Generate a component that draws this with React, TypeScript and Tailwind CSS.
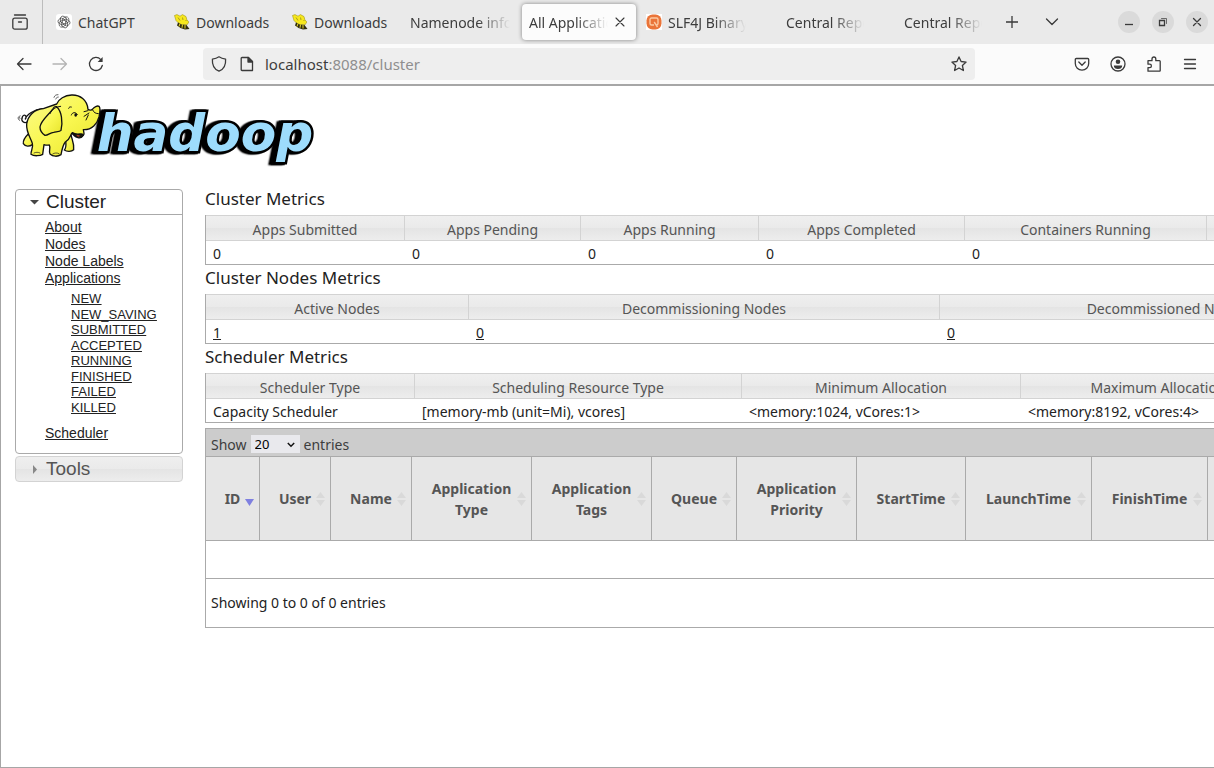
import type { ReactNode } from "react";

const ui = "font-['Noto_Sans','Open_Sans',sans-serif]";

type TabInfo = { title: string; icon: "gpt" | "bee" | "mvn" | "blank" | "none"; active?: boolean };

const tabs: TabInfo[] = [
  { title: "ChatGPT", icon: "gpt" },
  { title: "Downloads", icon: "bee" },
  { title: "Downloads", icon: "bee" },
  { title: "Namenode information", icon: "none" },
  { title: "All Applications", icon: "none", active: true },
  { title: "SLF4J Binary", icon: "mvn" },
  { title: "Central Repository", icon: "blank" },
  { title: "Central Repository", icon: "blank" },
];

function Favicon({ kind }: { kind: TabInfo["icon"] }) {
  if (kind === "none") return null;
  if (kind === "blank") return <span className="w-4 shrink-0" />;
  if (kind === "gpt")
    return (
      <svg viewBox="0 0 16 16" className="size-4 shrink-0" aria-hidden="true">
        <rect width="16" height="16" rx="3" fill="#fff" />
        <g fill="none" stroke="#444" strokeWidth="0.700">
          {[0, 60, 120, 180, 240, 300].map((a) => (
            <path key={a} transform={`rotate(${a} 8 8)`} d="M6.300 9V5L8.800 3.300A2.500 2.500 0 0 1 12.800 5.400V7.800L9.200 9.900" />
          ))}
        </g>
      </svg>
    );
  if (kind === "bee")
    return (
      <svg viewBox="0 0 16 16" className="size-4 shrink-0" aria-hidden="true">
        <path d="M.5 1.500 3 .6 6 2.200 8.500.600l3.500 2 .8 3 2 2.400-1.500 2.500L8 11 4.500 9 2 6.500Z" fill="#f7e81d" stroke="#a39619" strokeWidth=".6" />
        <path d="M4 8.500 7.500 10.500l5 .5 3 4-4.500.5L6.500 14 3 11.500Z" fill="#302c10" />
        <path d="m6 9.500-1 3M8.500 10.500 8 13.800M11 11V14.500" stroke="#e9d92a" strokeWidth="1" />
        <path d="m4 3.500 2 3M8.500 3.500l.5 2.500M11.500 6.500h1" stroke="#8a7f14" strokeWidth=".7" />
      </svg>
    );
  return (
    <svg viewBox="0 0 16 16" className="size-4 shrink-0" aria-hidden="true">
      <rect width="16" height="16" fill="#fff" />
      <rect x=".5" y=".5" width="15" height="15" rx="6" fill="#ea7439" />
      <path d="M8 11H5.500A1.500 1.500 0 0 1 4 9.500v-4A1.500 1.500 0 0 1 5.500 4h5A1.500 1.500 0 0 1 12 5.500v4a1.500 1.500 0 0 1-1.500 1.500M8.200 8l3.300 5" fill="none" stroke="#fbc9a2" strokeWidth="1.400" />
    </svg>
  );
}

function Glyph({ children, faded }: { children: ReactNode; faded?: boolean }) {
  return (
    <svg
      viewBox="0 0 16 16"
      className={faded ? "size-4 text-[#b4b4b4]" : "size-4 text-[#3a3a3a]"}
      fill="none"
      stroke="currentColor"
      strokeWidth="1.300"
      strokeLinecap="round"
      strokeLinejoin="round"
      aria-hidden="true"
    >
      {children}
    </svg>
  );
}

function IconButton({ label, children, faded }: { label: string; children: ReactNode; faded?: boolean }) {
  return (
    <button type="button" aria-label={label} disabled={faded} className="grid h-8 w-9 shrink-0 place-items-center">
      <Glyph faded={faded}>{children}</Glyph>
    </button>
  );
}

function WindowButton({ label, children }: { label: string; children: ReactNode }) {
  return (
    <button type="button" aria-label={label} className="grid size-[22px] place-items-center rounded-full bg-[#dadada]">
      <Glyph>{children}</Glyph>
    </button>
  );
}

function Tab({ tab }: { tab: TabInfo }) {
  return (
    <div
      className={
        tab.active
          ? "mx-[2px] flex h-9 w-[114px] shrink-0 items-center gap-1 rounded bg-[#fcfcfc] pr-2 pl-[7px] shadow-[0_0_4px_rgba(0,0,0,0.45)]"
          : "mx-[2px] flex h-9 w-[114px] shrink-0 items-center gap-[6px] pr-2 pl-[6px]"
      }
    >
      <Favicon kind={tab.icon} />
      <button
        type="button"
        className={
          tab.title.length > 10
            ? "min-w-0 flex-1 overflow-hidden text-left whitespace-nowrap [mask-image:linear-gradient(to_left,transparent,black_32px)]"
            : "min-w-0 flex-1 overflow-hidden text-left whitespace-nowrap"
        }
      >
        {tab.title}
      </button>
      {tab.active && (
        <button type="button" aria-label="Close tab" className="grid w-4 shrink-0 place-items-center">
          <Glyph>
            <path d="m4 4 8 8m0-8-8 8" strokeWidth="1.100" />
          </Glyph>
        </button>
      )}
    </div>
  );
}

function BrowserChrome() {
  return (
    <header className={`${ui} text-[#3d3d3d]`}>
      <div className="flex h-11 items-center bg-[#eaeaea] text-[14px]">
        <div className="flex h-full w-[43px] shrink-0 items-center justify-center border-r border-[#bcbcbc] pr-[2px]">
          <button type="button" aria-label="Recent browsing">
            <Glyph>
              <rect x=".8" y="4.200" width="14.400" height="11" rx="2" />
              <path d="M2.500 1h11M6.500 8h3" />
            </Glyph>
          </button>
        </div>
        <nav aria-label="Tabs" className="flex shrink-0 items-center pl-[5px]">
          {tabs.map((t, i) => (
            <Tab key={i} tab={t} />
          ))}
        </nav>
        <div className="flex shrink-0 gap-1 pl-[2px]">
          <IconButton label="New tab">
            <path d="M8 2v12M2 8h12" strokeLinecap="butt" />
          </IconButton>
          <IconButton label="List all tabs">
            <path d="m2.500 5 5.500 5.500L13.500 5" />
          </IconButton>
        </div>
        <div className="ml-auto flex shrink-0 gap-3 pr-[6px]">
          <WindowButton label="Minimize">
            <path d="M4 10.500h8" strokeLinecap="butt" />
          </WindowButton>
          <WindowButton label="Restore">
            <path d="M4.500 6.500h5v5h-5z" strokeLinejoin="miter" />
            <path d="M6.500 4.500h5v5" strokeWidth="1" strokeLinejoin="miter" opacity=".7" />
          </WindowButton>
          <WindowButton label="Close">
            <path d="m4.500 4.500 7 7m0-7-7 7" />
          </WindowButton>
        </div>
      </div>
      <div className="flex h-10 items-center bg-[#fbfbfb] px-[6px]">
        <IconButton label="Back">
          <path d="M15 8H1.500M7 2.500 1.500 8 7 13.500" />
        </IconButton>
        <IconButton label="Forward" faded>
          <path d="M1 8h13.500M9 2.500 14.500 8 9 13.500" />
        </IconButton>
        <IconButton label="Reload">
          <path d="M14.300 9.500A6.500 6.500 0 1 1 12.800 3.600" />
          <path d="M14.600 1v5h-5z" fill="currentColor" stroke="none" />
        </IconButton>
        <div className="ml-[89px] flex h-8 flex-1 items-center rounded bg-[#eeeeee] pl-2">
          <Glyph>
            <path d="M8 .8c2 1.400 4 2 6.600 2.300.4 5.500-1.300 10-6.600 12.100C2.700 13.100 1 8.600 1.400 3.100 4 2.800 6 2.200 8 .8Z" />
          </Glyph>
          <span className="ml-3">
            <Glyph>
              <path d="M3 1.500h6.500l4 4V14.500H3a.8.8 0 0 1-.8-.8V2.300a.8.8 0 0 1 .8-.8Z" />
              <path d="M9 1.500v4.500h4.500z" fill="currentColor" />
            </Glyph>
          </span>
          <div className="relative ml-[10px] flex-1 text-[15px] leading-5">
            <div aria-hidden="true" className="whitespace-nowrap">
              localhost<span className="text-[#8f8f8f]">:8088/cluster</span>
            </div>
            <input
              aria-label="Address"
              defaultValue="localhost:8088/cluster"
              className="absolute inset-0 w-full bg-transparent text-transparent caret-black outline-none"
            />
          </div>
          <button type="button" aria-label="Bookmark this page" className="pr-2">
            <Glyph>
              <path d="m8 .9 2.100 4.600 5 .6-3.700 3.400 1 5L8 12l-4.400 2.500 1-5L.9 6.100l5-.6Z" />
            </Glyph>
          </button>
        </div>
        <div className="ml-[89px] flex shrink-0">
          <IconButton label="Save to Pocket">
            <path d="M2.300 2.500h11.400a1 1 0 0 1 1 1V7.500a6.700 6.700 0 0 1-13.400 0v-4a1 1 0 0 1 1-1ZM4.800 6 8 9.200 11.200 6" />
          </IconButton>
          <IconButton label="Account">
            <circle cx="8" cy="8" r="7" />
            <circle cx="8" cy="5.800" r="2.300" fill="currentColor" stroke="none" />
            <path d="M3.800 9.500h8.400c0 2.300-1.700 3.600-4.200 3.600s-4.200-1.300-4.200-3.600Z" fill="currentColor" stroke="none" />
          </IconButton>
          <IconButton label="Extensions">
            <path d="M2 6.200V4.700h4V2.900a1.900 1.900 0 0 1 3.800 0v1.800h3.700a.7.700 0 0 1 .7.700V14.500a.7.700 0 0 1-.7.700H2v-3.600h1.700a1.700 1.700 0 0 0 0-3.400H2Z" />
          </IconButton>
          <IconButton label="Menu">
            <path d="M2.500 3.500h11M2.500 8h11M2.500 12.500h11" />
          </IconButton>
        </div>
      </div>
    </header>
  );
}

function HadoopLogo() {
  return (
    <svg viewBox="48 24 912 222" className="w-[304px]" role="img" aria-label="hadoop">
      <defs>
        <linearGradient id="hide" x1="0" y1="0" x2="1" y2="1">
          <stop offset="0" stopColor="#fbfa8c" />
          <stop offset=".5" stopColor="#f9f750" />
          <stop offset="1" stopColor="#e6e32a" />
        </linearGradient>
      </defs>
      <text
        x="290"
        y="198"
        className="font-['DejaVu_Sans',sans-serif] text-[155px] font-bold italic [filter:drop-shadow(-7px_1px_0_#000)_drop-shadow(-7px_1px_0_#000)]"
        fill="#9ddcfc"
        stroke="#000"
        strokeWidth="15"
        strokeLinejoin="miter"
        paintOrder="stroke"
      >
        hadoop
      </text>
      <g fill="url(#hide)" stroke="#111" strokeWidth="4" strokeLinecap="round" strokeLinejoin="round">
        <path d="M84 110c-12 8-22-2-17-14s16-2 9 6c4-14 26-28 52-31" fill="none" />
        <path d="M84 148c-12 12-15 20-14 28 6 9 18 9 27 3l8-18Z" />
        <path d="M197 158c0 18 4 30-4 37 8 6 22 5 28-1 2-18-5-30-8-44Z" />
        <path d="M130 71c-28 2-46 22-50 46-2 24 12 42 17 58 4 12-5 22-4 33 8 6 28 5 35 0l4-29c6 2 11 2 16 1 5 10-3 18 2 27 9 9 24 8 33 2 3-17 6-29 13-38 14-8 14-18 19-26 10 8 24 7 30 8 10 0 7-10 5-19 26 1 42-18 47-38 4-18 3-29 0-32-5-3-15 2-19 8-3 4-10 4-14 1-2-28-24-44-49-43-21 1-39 12-45 27Z" />
        <path d="M217 143c7 5 14 5 23 4 4 0 9-1 9 3-1 7-8 10-15 8-9-3-15-9-17-15Z" fill="#1a1609" />
        <path d="M229 151c4-2 9-1 11 1-3 4-8 4-11-1Z" fill="#a83a24" stroke="none" />
        <path d="M160 70c-14 20-38 36-40 56 0 12 7 20 15 25 10 0 15-8 26-9 10-2 19-2 22-6 6-25 2-58-13-71-5-1-8 0-10 5Z" />
        <path d="M150 86c6-13 16-20 32-22M214 90c2-8 13-11 18-1M206 70c1-4 4-5 8-4M252 80l12-3M252 94l15-10M258 105l7-15M278 75c3 8 10 11 17 11" fill="none" strokeWidth="3" />
        <ellipse cx="227" cy="90" rx="4" ry="5" fill="#111" stroke="none" />
        <path d="M162 37c2-6 6-8 12-8M167 42c2-4 5-6 8-6M55 96c-2 5 0 8 4 10M60 92c-2 3-2 7 0 9M102 204c5-3 13-3 18 0M158 207c6-4 13-4 19-1" fill="none" strokeWidth="2" />
      </g>
    </svg>
  );
}

const states = ["NEW", "NEW_SAVING", "SUBMITTED", "ACCEPTED", "RUNNING", "FINISHED", "FAILED", "KILLED"];
const glass = "bg-[linear-gradient(#efefef,#eaeaea_50%,#e4e4e4_50%,#ededed)]";

function Sidebar() {
  return (
    <nav aria-label="Cluster navigation" className="mt-[3px] w-[168px] shrink-0 font-['Liberation_Sans',Arial,sans-serif]">
      <div className="rounded border border-[#aaaaaa] bg-white">
        <button
          type="button"
          aria-expanded="true"
          className="flex h-[25px] w-full items-center gap-[7px] border-b border-[#aaaaaa] pl-[14px] text-[19px] leading-6"
        >
          <svg viewBox="0 0 9 6" className="h-[6px] w-[9px]" aria-hidden="true">
            <path d="M0 1h9L4.500 5.500z" fill="#454545" />
          </svg>
          Cluster
        </button>
        <ul className="pt-1 pb-[11px] pl-[29px] text-[14px] leading-[17px] underline">
          <li><a href="#about">About</a></li>
          <li><a href="#nodes">Nodes</a></li>
          <li><a href="#labels">Node Labels</a></li>
          <li>
            <a href="#apps">Applications</a>
            <ul className="mt-1 mb-[10px] grid h-[124px] grid-rows-8 pl-[26px] text-[13px] leading-[15px] underline">
              {states.map((s) => (
                <li key={s}><a href={`#${s}`}>{s}</a></li>
              ))}
            </ul>
          </li>
          <li><a href="#scheduler">Scheduler</a></li>
        </ul>
      </div>
      <button
        type="button"
        aria-expanded="false"
        className={`mt-[2px] flex h-[26px] w-full items-center gap-[7px] rounded border border-[#d3d3d3] pl-[14px] text-[19px] leading-6 text-[#555555] ${glass}`}
      >
        <svg viewBox="0 0 9 9" className="size-[9px]" aria-hidden="true">
          <path d="M3 0v9l4-4.500z" fill="#888" />
        </svg>
        Tools
      </button>
    </nav>
  );
}

type Col = { width: string; head: string; value: string; link?: boolean };

function Metrics({ title, width, cols }: { title: string; width: string; cols: Col[] }) {
  return (
    <section>
      <h2 className="pt-px pb-1 text-[17px] leading-6">{title}</h2>
      <table className={`table-fixed border-separate border-spacing-0 border-r border-b border-l border-[#aaaaaa] ${width}`}>
        <thead>
          <tr className="h-[26px]">
            {cols.map((c, i) => (
              <th
                key={i}
                className={`border-t border-r border-b border-[#d3d3d3] p-0 pt-1 leading-5 font-normal whitespace-nowrap text-[#555555] ${glass} ${c.width}`}
              >
                {c.head}
              </th>
            ))}
          </tr>
        </thead>
        <tbody>
          <tr className="h-[23px]">
            {cols.map((c, i) => (
              <td key={i} className="p-0 pt-[2px] pl-[7px] leading-5 whitespace-nowrap">
                {c.link ? <a href="#nodes" className="underline">{c.value}</a> : c.value}
              </td>
            ))}
          </tr>
        </tbody>
      </table>
    </section>
  );
}

const appCols = [
  { head: "ID", width: "w-[54px]" },
  { head: "User", width: "w-[71px]" },
  { head: "Name", width: "w-[81px]" },
  { head: "Application Type", width: "w-[120px]" },
  { head: "Application Tags", width: "w-[120px]" },
  { head: "Queue", width: "w-[85px]" },
  { head: "Application Priority", width: "w-[120px]" },
  { head: "StartTime", width: "w-[109px]" },
  { head: "LaunchTime", width: "w-[126px]" },
  { head: "FinishTime", width: "w-[116px]" },
  { head: "", width: "w-[98px]" },
];

function Applications() {
  return (
    <section className="mt-[5px] w-[1101px] border border-[#aaaaaa]">
      <div className="flex h-[27px] items-center bg-[#cccccc] pt-[3px] pl-[5px] text-[#3d3d3d]">
        <label htmlFor="page-size">Show</label>
        <span className="relative mx-1 flex">
          <select
            id="page-size"
            defaultValue="20"
            className="h-[18px] w-[49px] appearance-none bg-[#e9e9ed] pl-1 text-[13px] leading-[18px] text-black"
          >
            <option>20</option>
            <option>40</option>
            <option>60</option>
            <option>80</option>
            <option>100</option>
          </select>
          <svg viewBox="0 0 8 6" className="pointer-events-none absolute top-[7px] right-[5px] h-[6px] w-2" aria-hidden="true">
            <path d="m.8 1 3.200 3.200L7.200 1" fill="none" stroke="#111" strokeWidth="1.500" />
          </svg>
        </span>
        <span>entries</span>
      </div>
      <table className="w-full table-fixed border-separate border-spacing-0">
        <thead>
          <tr className="h-[85px] bg-[#e6e6e6]">
            {appCols.map((c, i) => (
              <th key={i} className={`relative border-y border-r border-[#aaaaaa] px-3 py-0 leading-[21px] font-bold text-[#555555] ${c.width}`}>
                {c.head && <button type="button">{c.head}</button>}
                {c.head && (
                  <svg viewBox="0 0 9 14" className="pointer-events-none absolute top-[35px] right-[5px] h-[14px] w-[9px]" aria-hidden="true">
                    {i === 0 ? (
                      <path d="M0 7h9l-4.500 7z" fill="#7f80e0" />
                    ) : (
                      <path d="M0 6h9L4.500 0zM0 8h9l-4.500 6z" fill="#d9d9d9" />
                    )}
                  </svg>
                )}
              </th>
            ))}
          </tr>
        </thead>
        <tbody>
          <tr className="h-[38px]">
            <td colSpan={appCols.length} className="border-b border-[#aaaaaa]" />
          </tr>
        </tbody>
      </table>
      <p className="py-[14px] pl-[5px] leading-5">Showing 0 to 0 of 0 entries</p>
    </section>
  );
}

export default function App() {
  return (
    <div className="flex min-h-screen flex-col overflow-hidden bg-white text-[#222222]">
      <BrowserChrome />
      <main className="flex-1 border-t-2 border-b border-l border-[#a6a6a6]">
        <div className="h-[100px] pt-[7px] pl-[15px]">
          <HadoopLogo />
        </div>
        <div className="flex items-start gap-[22px] pl-[14px]">
          <Sidebar />
          <div className={`min-w-0 flex-1 text-[14px] ${ui}`}>
            <Metrics
              title="Cluster Metrics"
              width="w-[1102px]"
              cols={[
                { width: "w-[199px]", head: "Apps Submitted", value: "0" },
                { width: "w-[176px]", head: "Apps Pending", value: "0" },
                { width: "w-[178px]", head: "Apps Running", value: "0" },
                { width: "w-[206px]", head: "Apps Completed", value: "0" },
                { width: "w-[242px]", head: "Containers Running", value: "0" },
                { width: "w-[99px]", head: "", value: "" },
              ]}
            />
            <Metrics
              title="Cluster Nodes Metrics"
              width="w-[1190px]"
              cols={[
                { width: "w-[263px]", head: "Active Nodes", value: "1", link: true },
                { width: "w-[471px]", head: "Decommissioning Nodes", value: "0", link: true },
                { width: "w-[454px]", head: "Decommissioned Nodes", value: "0", link: true },
              ]}
            />
            <Metrics
              title="Scheduler Metrics"
              width="w-[1092px]"
              cols={[
                { width: "w-[209px]", head: "Scheduler Type", value: "Capacity Scheduler" },
                { width: "w-[327px]", head: "Scheduling Resource Type", value: "[memory-mb (unit=Mi), vcores]" },
                { width: "w-[279px]", head: "Minimum Allocation", value: "<memory:1024, vCores:1>" },
                { width: "w-[275px]", head: "Maximum Allocation", value: "<memory:8192, vCores:4>" },
              ]}
            />
            <Applications />
          </div>
        </div>
      </main>
    </div>
  );
}
